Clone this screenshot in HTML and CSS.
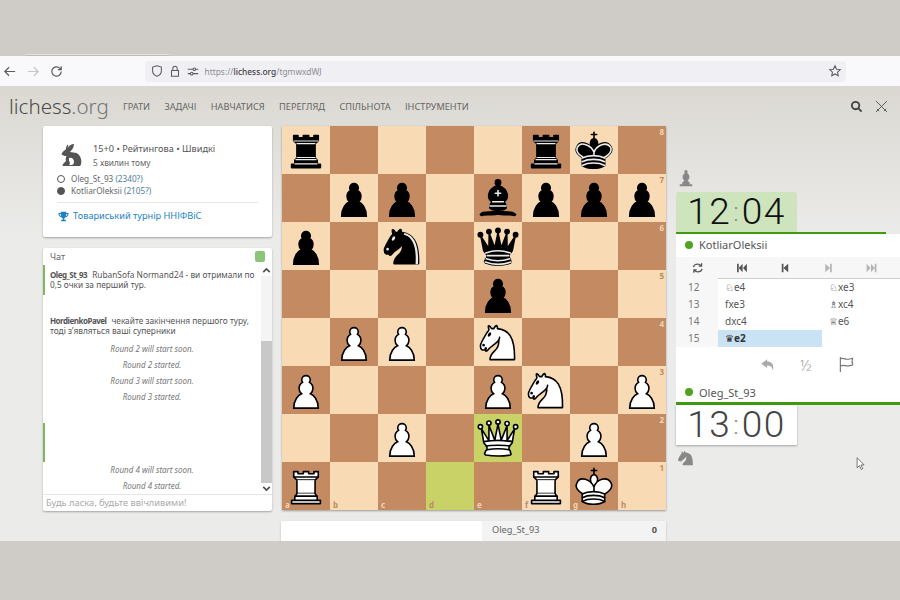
FILE: index.html
```html
<!DOCTYPE html>
<html lang="uk">
<head>
<meta charset="utf-8">
<title>lichess.org</title>
<link rel="stylesheet" href="styles.css">
</head>
<body>
<div class="band-top"><div class="tab-edge"></div></div>

<div class="toolbar">
  <svg class="tb-ic" viewBox="0 0 16 16"><path d="M14 8H3M7.5 3.500 3 8l4.500 4.500"/></svg>
  <svg class="tb-ic off" viewBox="0 0 16 16"><path d="M2 8h11M8.500 3.500 13 8l-4.500 4.500"/></svg>
  <svg class="tb-ic" viewBox="0 0 16 16"><path d="M13 8a5 5 0 1 1-1.500-3.600L13 6M13 2.500V6H9.500"/></svg>
  <div class="urlbar">
    <svg class="url-ic" viewBox="0 0 16 16"><path d="M8 2 3 3.500V8c0 3 2.200 5 5 6 2.800-1 5-3 5-6V3.500z"/></svg>
    <svg class="url-ic" viewBox="0 0 16 16"><path d="M4 7.500h8V14H4zM5.500 7.500V5a2.500 2.500 0 0 1 5 0v2.500"/></svg>
    <svg class="url-ic" viewBox="0 0 16 16"><path d="M2 6h6M11 6h3M2 11h3M8 11h6"/><circle cx="9.500" cy="6" r="1.500"/><circle cx="6.500" cy="11" r="1.500"/></svg>
    <span class="url">https://<b>lichess.org</b>/tgmwxdWJ</span>
    <svg class="url-ic star" viewBox="0 0 16 16"><path d="m8 2 1.800 3.900 4.200.5-3.100 2.900.8 4.200L8 11.400l-3.700 2.100.8-4.200L2 6.400l4.200-.5z"/></svg>
  </div>
</div>

<div class="page">
  <header class="site-head">
    <div class="logo">lichess<span>.org</span></div>
    <nav class="nav">
      <span>Грати</span><span>Задачі</span><span>Навчатися</span><span>Перегляд</span><span>Спільнота</span><span>Інструменти</span>
    </nav>
    <div class="head-ic">
      <svg class="ic-search" viewBox="0 0 14 14"><circle cx="6" cy="6" r="4"/><path d="m9 9 3.500 3.500"/></svg>
      <svg class="ic-swords" viewBox="0 0 14 14"><path d="m1 1 12 12M13 1 1 13M2 9.500 4.500 12M12 9.500 9.500 12"/></svg>
    </div>
  </header>

  <main class="layout">
    <aside class="left">
      <section class="card game">
        <div class="game-top">
          <svg class="hare" viewBox="0 0 24 24"><path fill-rule="evenodd" d="M15 1c-3 0-5 2-6.500 4C9 3.500 9.500 2 9 1.500 7.500 2 7 4.500 6.800 6.500 4.500 7.500 3 9.500 2.500 11.500l3 1.500h2C6.500 15 6.500 17 7 18l-3 3-.5 2H21l1-1.500c1-4 0-9-4.500-11.500C15.500 9.500 13 9.500 11 9c2-2 4-5 4-8zM10 15c3-1 5 1 5 4 0 1.500-1 2.500-2 3h-3c1.500-1 1-3 0-4z"/></svg>
          <div>
            <div class="game-title">15+0 • Рейтингова • Швидкі</div>
            <div class="game-time">5 хвилин тому</div>
          </div>
        </div>
        <div class="pl"><i class="dot w"></i>Oleg_St_93 <span class="rt">(2340?)</span></div>
        <div class="pl"><i class="dot b"></i>KotliarOleksii <span class="rt">(2105?)</span></div>
        <div class="tour">
          <svg class="trophy" viewBox="0 0 14 14"><path d="M3.500 1h7v1.500h3C13.500 6 12 7.500 9.500 8 9 8.700 8.500 9 8 9.300V11h2v2H4v-2h2V9.300C5.500 9 5 8.700 4.500 8 2 7.500.5 6 .5 2.500h3zM2 3.800c.2 1.500.8 2.300 2 2.700-.3-.8-.4-1.800-.5-2.700zm10 0h-1.500c-.1.900-.2 1.900-.5 2.700 1.200-.4 1.800-1.200 2-2.700z"/></svg>
          Товариський турнір ННІФВіС
        </div>
      </section>

      <section class="card chat">
        <div class="chat-head"><span>Чат</span><i class="chat-toggle"></i></div>
        <div class="chat-body">
          <div class="chat-list">
            <div class="msg flag">
              <div class="ln"><b>Oleg_St_93</b><span>RubanSofa Normand24 - ви отримали по</span></div>
              <div class="ln">0,5 очки за перший тур.</div>
            </div>
            <div class="gap-a"></div>
            <div class="msg tight">
              <div class="ln"><b>HordienkoPavel</b><span>чекайте закінчення першого туру,</span></div>
              <div class="ln">тоді з’являться ваші суперники</div>
            </div>
            <p class="sys">Round 2 will start soon.</p>
            <p class="sys">Round 2 started.</p>
            <p class="sys">Round 3 will start soon.</p>
            <p class="sys">Round 3 started.</p>
            <div class="gap-b"></div>
            <div class="hidden-msg"></div>
            <p class="sys">Round 4 will start soon.</p>
            <p class="sys">Round 4 started.</p>
          </div>
          <div class="scroll">
            <svg class="sc-arrow" viewBox="0 0 10 10"><path d="m2 6.500 3-3 3 3"/></svg>
            <div class="sc-track"><div class="sc-thumb"></div></div>
            <svg class="sc-arrow" viewBox="0 0 10 10"><path d="m2 3.500 3 3 3-3"/></svg>
          </div>
        </div>
        <div class="chat-input">Будь ласка, будьте ввічливими!</div>
      </section>
    </aside>

    <section class="center">
      <div class="board">
        <div class="sq"><svg class="pc" viewBox="0 0 45 45"><use href="#br"/></svg></div><div class="sq"></div><div class="sq"></div><div class="sq"></div><div class="sq"></div><div class="sq"><svg class="pc" viewBox="0 0 45 45"><use href="#br"/></svg></div><div class="sq"><svg class="pc" viewBox="0 0 45 45"><use href="#bk"/></svg></div><div class="sq"><span class="rk on-d">8</span></div>
        <div class="sq"></div><div class="sq"><svg class="pc" viewBox="0 0 45 45"><use href="#bp"/></svg></div><div class="sq"><svg class="pc" viewBox="0 0 45 45"><use href="#bp"/></svg></div><div class="sq"></div><div class="sq"><svg class="pc" viewBox="0 0 45 45"><use href="#bb"/></svg></div><div class="sq"><svg class="pc" viewBox="0 0 45 45"><use href="#bp"/></svg></div><div class="sq"><svg class="pc" viewBox="0 0 45 45"><use href="#bp"/></svg></div><div class="sq"><svg class="pc" viewBox="0 0 45 45"><use href="#bp"/></svg><span class="rk on-l">7</span></div>
        <div class="sq"><svg class="pc" viewBox="0 0 45 45"><use href="#bp"/></svg></div><div class="sq"></div><div class="sq"><svg class="pc" viewBox="0 0 45 45"><use href="#bn"/></svg></div><div class="sq"></div><div class="sq"><svg class="pc" viewBox="0 0 45 45"><use href="#bq"/></svg></div><div class="sq"></div><div class="sq"></div><div class="sq"><span class="rk on-d">6</span></div>
        <div class="sq"></div><div class="sq"></div><div class="sq"></div><div class="sq"></div><div class="sq"><svg class="pc" viewBox="0 0 45 45"><use href="#bp"/></svg></div><div class="sq"></div><div class="sq"></div><div class="sq"><span class="rk on-l">5</span></div>
        <div class="sq"></div><div class="sq"><svg class="pc" viewBox="0 0 45 45"><use href="#wp"/></svg></div><div class="sq"><svg class="pc" viewBox="0 0 45 45"><use href="#wp"/></svg></div><div class="sq"></div><div class="sq"><svg class="pc" viewBox="0 0 45 45"><use href="#wn"/></svg></div><div class="sq"></div><div class="sq"></div><div class="sq"><span class="rk on-d">4</span></div>
        <div class="sq"><svg class="pc" viewBox="0 0 45 45"><use href="#wp"/></svg></div><div class="sq"></div><div class="sq"></div><div class="sq"></div><div class="sq"><svg class="pc" viewBox="0 0 45 45"><use href="#wp"/></svg></div><div class="sq"><svg class="pc" viewBox="0 0 45 45"><use href="#wn"/></svg></div><div class="sq"></div><div class="sq"><svg class="pc" viewBox="0 0 45 45"><use href="#wp"/></svg><span class="rk on-l">3</span></div>
        <div class="sq"></div><div class="sq"></div><div class="sq"><svg class="pc" viewBox="0 0 45 45"><use href="#wp"/></svg></div><div class="sq"></div><div class="sq hl"><svg class="pc" viewBox="0 0 45 45"><use href="#wq"/></svg></div><div class="sq"></div><div class="sq"><svg class="pc" viewBox="0 0 45 45"><use href="#wp"/></svg></div><div class="sq"><span class="rk on-d">2</span></div>
        <div class="sq"><svg class="pc" viewBox="0 0 45 45"><use href="#wr"/></svg><span class="fl on-d">a</span></div><div class="sq"><span class="fl on-l">b</span></div><div class="sq"><span class="fl on-d">c</span></div><div class="sq hl"><span class="fl on-l">d</span></div><div class="sq"><span class="fl on-d">e</span></div><div class="sq"><svg class="pc" viewBox="0 0 45 45"><use href="#wr"/></svg><span class="fl on-l">f</span></div><div class="sq"><svg class="pc" viewBox="0 0 45 45"><use href="#wk"/></svg><span class="fl on-d">g</span></div><div class="sq"><span class="fl on-l">h</span><span class="rk on-l">1</span></div>
      </div>
      <div class="crosstable">
        <div class="ct-blank"></div>
        <div class="ct-row"><span>Oleg_St_93</span><b>0</b></div>
      </div>
    </section>

    <aside class="right">
      <svg class="ghost" viewBox="0 0 24 24"><path d="M12 2.500a2 2 0 0 1 1.300 3.500C15.500 7.500 16.500 9.500 16 12c-.3 1.300-1.200 2.200-2 2.800.3 1 1.300 2 2.500 2.500v2.200h3V22H4.500v-2.500h3v-2.200c1.200-.5 2.200-1.500 2.500-2.500-.8-.6-1.700-1.500-2-2.800-.5-2.500.5-4.500 2.700-6A2 2 0 0 1 12 2.500z"/></svg>
      <div class="clock running"><span>12</span><i>:</i><span>04</span></div>
      <div class="bar short"></div>
      <div class="panel">
        <div class="user"><i class="on"></i>KotliarOleksii</div>
        <div class="controls">
          <svg class="ctl flip" viewBox="0 0 14 14"><path d="M2 6C2.500 3.500 4.500 2.500 7 2.500c1.700 0 3 .7 4 1.800M11.500 1.500v3.300H8.200M12 8c-.5 2.500-2.500 3.500-5 3.500-1.700 0-3-.7-4-1.800M2.500 12.500V9.200h3.300"/></svg>
          <svg class="ctl" viewBox="0 0 14 14"><path class="f" d="M1.500 2h2v10h-2zM8 2v10L3.500 7zM13 2v10L8.500 7z"/></svg>
          <svg class="ctl" viewBox="0 0 14 14"><path class="f" d="M3.500 2h2v10h-2zM11 2v10L5.500 7z"/></svg>
          <svg class="ctl dim" viewBox="0 0 14 14"><path class="f" d="M8.500 2h2v10h-2zM3 2v10l5.500-5z"/></svg>
          <svg class="ctl dim" viewBox="0 0 14 14"><path class="f" d="M10.500 2h2v10h-2zM1 2v10l4.500-5zM6 2v10l4.500-5z"/></svg>
        </div>
        <div class="moves">
          <div class="idx">12</div><div class="mv"><em>♘</em>e4</div><div class="mv"><em>♘</em>xe3</div>
          <div class="idx">13</div><div class="mv">fxe3</div><div class="mv"><em>♗</em>xc4</div>
          <div class="idx">14</div><div class="mv">dxc4</div><div class="mv"><em>♕</em>e6</div>
          <div class="idx">15</div><div class="mv cur"><em>♛</em>e2</div><div class="mv"></div>
        </div>
        <div class="actions">
          <svg class="act back" viewBox="0 0 18 18"><path d="M8 2.500 1.500 7.500 8 12.500V9.500c3.500 0 5.500 1 6.500 5.500 1.500-5.500-.5-10-6.500-10z"/></svg>
          <span class="half">½</span>
          <svg class="act flag-ic" viewBox="0 0 18 18"><path d="M2.500 1v16M2.500 3c3-1.500 5 .5 7 .5 2 0 3.500-.5 6-1-.7 2-.7 4.500 0 7-2.500.5-4 1-6 1s-4-1.500-7 0"/></svg>
        </div>
        <div class="user low"><i class="on"></i>Oleg_St_93</div>
      </div>
      <div class="bar"></div>
      <div class="clock"><span>13</span><i>:</i><span>00</span></div>
      <svg class="ghost knight" viewBox="0 0 45 45"><path d="M22 10c10.500 1 16.500 8 16 29H15c0-9 10-6.500 8-21 .4 2.900-5.500 7.400-8 9-3 2-2.800 4.300-5 4-1-.9 1.400-3 0-3-1 0 .2 1.200-1 2-1 0-4 1-4-4 0-2 6-12 6-12s1.900-1.900 2-3.500c-.7-1-.5-2-.5-3 1-1 3 2.500 3 2.500h2s.8-2 2.500-3c1 0 1 3 1 3z"/></svg>
    </aside>
  </main>
  <svg class="cursor" viewBox="0 0 12 18"><path d="M1 1v13l3-3 2.200 5 2-1-2.200-4.800H10z"/></svg>
</div>

<div class="band-bottom"></div>

<svg class="defs" width="0" height="0" aria-hidden="true">
<defs>
<g id="wp"><path d="M22.5 9c-2.21 0-4 1.79-4 4 0 .89.29 1.71.78 2.38C17.33 16.5 16 18.59 16 21c0 2.03.94 3.84 2.41 5.03-3 1.06-7.41 5.55-7.41 13.47h23c0-7.92-4.41-12.41-7.41-13.47 1.47-1.19 2.41-3 2.41-5.03 0-2.41-1.33-4.5-3.28-5.62.49-.67.78-1.49.78-2.38 0-2.21-1.79-4-4-4z" fill="#fff" stroke="#000" stroke-width="1.5" stroke-linecap="round"/></g>
<g id="bp"><path d="M22.5 9c-2.21 0-4 1.79-4 4 0 .89.29 1.71.78 2.38C17.33 16.5 16 18.59 16 21c0 2.03.94 3.84 2.41 5.03-3 1.06-7.41 5.55-7.41 13.47h23c0-7.92-4.41-12.41-7.41-13.47 1.47-1.19 2.41-3 2.41-5.03 0-2.41-1.33-4.5-3.28-5.62.49-.67.78-1.49.78-2.38 0-2.21-1.79-4-4-4z" fill="#000" stroke="#000" stroke-width="1.5" stroke-linecap="round"/></g>
<g id="wr" fill="#fff" fill-rule="evenodd" stroke="#000" stroke-width="1.5" stroke-linecap="round" stroke-linejoin="round">
<path d="M9 39h27v-3H9v3zM12 36v-4h21v4H12zM11 14V9h4v2h5V9h5v2h5V9h4v5" stroke-linecap="butt"/>
<path d="M34 14l-3 3H14l-3-3"/>
<path d="M31 17v12.5H14V17" stroke-linecap="butt" stroke-linejoin="miter"/>
<path d="M31 29.5l1.5 2.5h-20l1.5-2.5"/>
<path d="M11 14h23" fill="none" stroke-linejoin="miter"/>
</g>
<g id="br" fill="#000" fill-rule="evenodd" stroke="#000" stroke-width="1.5" stroke-linecap="round" stroke-linejoin="round">
<path d="M9 39h27v-3H9v3zM12.5 32l1.5-2.5h17l1.5 2.5h-20zM12 36v-4h21v4H12z" stroke-linecap="butt"/>
<path d="M14 29.5v-13h17v13H14z" stroke-linecap="butt" stroke-linejoin="miter"/>
<path d="M14 16.5L11 14h23l-3 2.5H14zM11 14V9h4v2h5V9h5v2h5V9h4v5H11z" stroke-linecap="butt"/>
<path d="M12 35.5h21M13 31.5h19M14 29.5h17M14 16.5h17M11 14h23" fill="none" stroke="#ececec" stroke-width="1" stroke-linejoin="miter"/>
</g>
<g id="wn" fill="none" fill-rule="evenodd" stroke="#000" stroke-width="1.5" stroke-linecap="round" stroke-linejoin="round">
<path d="M22 10c10.5 1 16.5 8 16 29H15c0-9 10-6.5 8-21" fill="#fff"/>
<path d="M24 18c.38 2.91-5.55 7.37-8 9-3 2-2.82 4.34-5 4-1.042-.94 1.41-3.04 0-3-1 0 .19 1.23-1 2-1 0-4.003 1-4-4 0-2 6-12 6-12s1.89-1.9 2-3.5c-.73-.994-.5-2-.5-3 1-1 3 2.5 3 2.5h2s.78-1.992 2.5-3c1 0 1 3 1 3" fill="#fff"/>
<path d="M9.5 25.5a.5.5 0 1 1-1 0 .5.5 0 1 1 1 0zm5.433-9.75a.5 1.5 30 1 1-.866-.5.5 1.5 30 1 1 .866.5z" fill="#000"/>
</g>
<g id="bn" fill="none" fill-rule="evenodd" stroke="#000" stroke-width="1.5" stroke-linecap="round" stroke-linejoin="round">
<path d="M22 10c10.5 1 16.5 8 16 29H15c0-9 10-6.5 8-21" fill="#000"/>
<path d="M24 18c.38 2.91-5.55 7.37-8 9-3 2-2.82 4.34-5 4-1.042-.94 1.41-3.04 0-3-1 0 .19 1.23-1 2-1 0-4.003 1-4-4 0-2 6-12 6-12s1.89-1.9 2-3.5c-.73-.994-.5-2-.5-3 1-1 3 2.500 3 2.500h2s.78-1.992 2.500-3c1 0 1 3 1 3" fill="#000"/>
<path d="M9.5 25.5a.5.5 0 1 1-1 0 .5.5 0 1 1 1 0zm5.433-9.75a.5 1.5 30 1 1-.866-.5.5 1.5 30 1 1 .866.5z" fill="#ececec" stroke="#ececec"/>
<path d="M24.55 10.4l-.45 1.45.5.15c3.15 1 5.65 2.49 7.9 6.75S35.75 29.06 35.25 39l-.05.5h2.25l.05-.5c.5-10.06-.88-16.85-3.25-21.34-2.37-4.49-5.79-6.64-9.19-7.16l-.51-.1z" fill="#ececec" stroke="none"/>
</g>
<g id="bb" fill="none" fill-rule="evenodd" stroke="#000" stroke-width="1.5" stroke-linecap="round" stroke-linejoin="round">
<g fill="#000" stroke-linecap="butt">
<path d="M9 36c3.39-.97 10.11.43 13.5-2 3.39 2.43 10.11 1.03 13.5 2 0 0 1.65.54 3 2-.68.97-1.65.99-3 .5-3.39-.97-10.11.46-13.5-1-3.39 1.46-10.11.03-13.5 1-1.354.49-2.323.47-3-.5 1.354-1.94 3-2 3-2z"/>
<path d="M15 32c2.5 2.5 12.5 2.5 15 0 .5-1.5 0-2 0-2 0-2.5-2.5-4-2.5-4 5.5-1.5 6-11.5-5-15.5-11 4-10.5 14-5 15.5 0 0-2.5 1.5-2.5 4 0 0-.5.5 0 2z"/>
<path d="M25 8a2.5 2.5 0 1 1-5 0 2.5 2.5 0 1 1 5 0z"/>
</g>
<path d="M17.5 26h10M15 30h15m-7.5-14.5v5M20 18h5" stroke="#ececec" stroke-linejoin="miter"/>
</g>
<g id="bq" fill-rule="evenodd" stroke="#000" stroke-width="1.5" stroke-linecap="round" stroke-linejoin="round">
<g stroke="none"><circle cx="6" cy="12" r="2.75"/><circle cx="14" cy="9" r="2.75"/><circle cx="22.5" cy="8" r="2.75"/><circle cx="31" cy="9" r="2.75"/><circle cx="39" cy="12" r="2.75"/></g>
<path d="M9 26c8.5-1.5 21-1.5 27 0l2.5-12.5L31 25l-.3-14.1-5.2 13.6-3-14.5-3 14.5-5.2-13.6L14 25 6.5 13.5 9 26z" stroke-linecap="butt"/>
<path d="M9 26c0 2 1.5 2 2.5 4 1 1.5 1 1 .5 3.5-1.5 1-1.5 2.5-1.5 2.5-1.5 1.5.5 2.5.5 2.5 6.5 1 16.5 1 23 0 0 0 1.5-1 0-2.5 0 0 .5-1.5-1-2.5-.5-2.5-.5-2 .5-3.5 1-2 2.5-2 2.5-4-8.5-1.5-18.5-1.5-27 0z" stroke-linecap="butt"/>
<path d="M11 38.5a35 35 1 0 0 23 0" fill="none" stroke-linecap="butt"/>
<path d="M11 29a35 35 1 0 1 23 0M12.5 31.5h20M11.5 34.5a35 35 1 0 0 22 0M10.5 37.5a35 35 1 0 0 24 0" fill="none" stroke="#ececec"/>
</g>
<g id="wq" fill="#fff" fill-rule="evenodd" stroke="#000" stroke-width="1.5" stroke-linecap="round" stroke-linejoin="round">
<path d="M8 12a2 2 0 1 1-4 0 2 2 0 1 1 4 0zM24.5 7.5a2 2 0 1 1-4 0 2 2 0 1 1 4 0zM41 12a2 2 0 1 1-4 0 2 2 0 1 1 4 0zM16 8.5a2 2 0 1 1-4 0 2 2 0 1 1 4 0zM33 9a2 2 0 1 1-4 0 2 2 0 1 1 4 0z"/>
<path d="M9 26c8.5-1.5 21-1.5 27 0l2-12-7 11V11l-5.5 13.5-3-15-3 15-5.5-14V25L7 14l2 12z" stroke-linecap="butt"/>
<path d="M9 26c0 2 1.5 2 2.5 4 1 1.5 1 1 .5 3.5-1.5 1-1.5 2.5-1.5 2.5-1.5 1.5.5 2.5.5 2.5 6.5 1 16.5 1 23 0 0 0 1.5-1 0-2.5 0 0 .5-1.5-1-2.5-.5-2.5-.5-2 .5-3.5 1-2 2.5-2 2.5-4-8.5-1.5-18.5-1.5-27 0z" stroke-linecap="butt"/>
<path d="M11.5 30c3.5-1 18.5-1 22 0M12 33.5c6-1 15-1 21 0" fill="none"/>
</g>
<g id="wk" fill="none" fill-rule="evenodd" stroke="#000" stroke-width="1.5" stroke-linecap="round" stroke-linejoin="round">
<path d="M22.5 11.63V6M20 8h5" stroke-linejoin="miter"/>
<path d="M22.5 25s4.5-7.5 3-10.5c0 0-1-2.5-3-2.5s-3 2.5-3 2.5c-1.5 3 3 10.5 3 10.5" fill="#fff" stroke-linecap="butt" stroke-linejoin="miter"/>
<path d="M11.5 37c5.5 3.5 15.5 3.5 21 0v-7s9-4.5 6-10.5c-4-6.5-13.5-3.5-16 4V27v-3.5c-3.5-7.5-13-10.5-16-4-3 6 5 10 5 10V37z" fill="#fff"/>
<path d="M11.5 30c5.5-3 15.5-3 21 0m-21 3.5c5.5-3 15.5-3 21 0m-21 3.5c5.5-3 15.5-3 21 0"/>
</g>
<g id="bk" fill="none" fill-rule="evenodd" stroke="#000" stroke-width="1.5" stroke-linecap="round" stroke-linejoin="round">
<path d="M22.5 11.63V6" stroke-linejoin="miter"/>
<path d="M22.5 25s4.5-7.5 3-10.5c0 0-1-2.5-3-2.5s-3 2.5-3 2.5c-1.5 3 3 10.5 3 10.5" fill="#000" stroke-linecap="butt" stroke-linejoin="miter"/>
<path d="M11.5 37c5.5 3.5 15.5 3.5 21 0v-7s9-4.5 6-10.5c-4-6.5-13.5-3.5-16 4V27v-3.5c-3.5-7.5-13-10.5-16-4-3 6 5 10 5 10V37z" fill="#000"/>
<path d="M20 8h5" stroke-linejoin="miter"/>
<path d="M32 29.5s8.5-4 6.03-9.65C34.15 14 25 18 22.5 24.5l.01 2.1-.01-2.1C20 18 9.906 14 6.997 19.85c-2.497 5.65 4.853 9 4.853 9" stroke="#ececec"/>
<path d="M11.5 30c5.5-3 15.5-3 21 0m-21 3.5c5.5-3 15.5-3 21 0m-21 3.5c5.5-3 15.5-3 21 0" stroke="#ececec"/>
</g>
</defs>
</svg>
</body>
</html>
```

FILE: styles.css
```css
* { box-sizing: border-box; }
html { margin: 0; height: 100%; background: #cfcbc7; }
body {
  margin: 0;
  width: 900px;
  height: 600px;
  overflow: hidden;
  display: flex;
  flex-direction: column;
  font-family: "Noto Sans", "Open Sans", sans-serif;
  color: #555;
  background: #cfcbc7;
}
.defs { position: absolute; left: 0; bottom: 0; }

.band-top { height: 56px; flex: none; background-color: #cfcbc7; display: flex; align-items: flex-end; padding-left: 25px; }
.tab-edge { width: 145px; height: 2px; background: #e4e3e3; border-radius: 0 0 3px 3px; border-bottom: 1px solid #bdbab7; }
.band-bottom { height: 59px; flex: none; background: #cfcbc7; }

.toolbar { height: 30px; flex: none; background: #f9f9fb; display: flex; align-items: center; padding-left: 2px; }
.tb-ic { width: 15px; height: 15px; margin-right: 8.500px; fill: none; stroke: #5b5b66; stroke-width: 1.300; flex: none; }
.tb-ic.off { stroke: #c4c4ca; }
.urlbar { margin-left: 72px; width: 701px; height: 21px; background: #f0f0f4; border-radius: 4px; display: flex; align-items: center; padding: 0 4px 0 5px; position: relative; flex: none; }
.url-ic { width: 14px; height: 14px; margin-right: 4px; fill: none; stroke: #5b5b66; stroke-width: 1.200; flex: none; }
.url { font-size: 8.400px; color: #8d8d95; margin-left: 1px; }
.url b { color: #3f3f47; font-weight: 500; }
.star { margin-left: auto; margin-right: 0; }

.page {
  flex: 1;
  min-height: 0;
  overflow: hidden;
  position: relative;
  background: linear-gradient(to bottom, #dbd8d2, #ebebe9 150px);
}
.site-head { height: 40px; display: flex; align-items: center; padding-left: 9px; }
.logo { font-size: 20.600px; font-weight: 300; color: #4a4a4a; width: 114px; line-height: 40px; }
.logo span { color: #757575; }
.nav { display: flex; gap: 14.400px; font-size: 9.200px; text-transform: uppercase; color: #666; padding-top: 1px; }
.head-ic { margin-left: auto; display: flex; align-items: center; gap: 12px; padding-right: 12px; }
.ic-search { width: 13px; height: 13px; fill: none; stroke: #444; stroke-width: 2; }
.ic-swords { width: 13px; height: 13px; fill: none; stroke: #555; stroke-width: 1; }

.layout { display: flex; padding-left: 43px; align-items: flex-start; }
.card { background: #fff; border-radius: 2px; box-shadow: 0 1px 2px rgba(0,0,0,.3); }
.left { width: 229px; flex: none; display: flex; flex-direction: column; gap: 11px; }

.game { height: 111px; padding: 14px 14px 0 14px; }
.game-top { display: flex; align-items: center; gap: 10px; height: 30px; margin-bottom: 3px; padding-left: 2px; }
.hare { width: 24px; height: 24px; fill: #555; flex: none; }
.game-title { font-size: 9.200px; line-height: 14px; color: #555; }
.game-time { font-size: 8.300px; line-height: 13px; color: #666; }
.pl { display: flex; align-items: center; font-size: 8.200px; line-height: 12px; color: #666; white-space: pre; }
.rt { color: #4f7ea0; }
.dot { width: 8px; height: 8px; border-radius: 50%; margin-right: 6px; border: 1.500px solid #555; flex: none; }
.dot.b { background: #555; }
.tour { margin-top: 5px; border-top: 1px solid #e5e5e5; padding-top: 6px; font-size: 9.200px; line-height: 14px; color: #1b83c4; display: flex; align-items: center; gap: 4px; }
.trophy { width: 11px; height: 11px; fill: #1b83c4; flex: none; margin-left: 1px; }

.chat { height: 263px; display: flex; flex-direction: column; }
.chat-head { height: 17px; display: flex; justify-content: space-between; align-items: center; padding: 0 7px; font-size: 9px; color: #666; }
.chat-toggle { width: 10px; height: 11px; background: #8cc47a; border-radius: 2px; }
.chat-body { flex: 1; min-height: 0; display: flex; }
.chat-list { flex: 1; min-width: 0; }
.msg { padding: 5px 4px 5px 7px; font-size: 8.300px; line-height: 10px; color: #555; }
.ln { display: flex; gap: 5px; white-space: nowrap; }
.msg b { font-size: 8px; font-weight: 700; letter-spacing: -.5px; }
.msg.flag { border-left: 2px solid #7db85f; padding-left: 5px; height: 30px; }
.msg.tight { padding-top: 0; }
.gap-a { height: 21px; }
.gap-b { height: 18px; }
.hidden-msg { height: 39px; border-left: 2px solid #7db85f; }
.sys { margin: 0; height: 16px; line-height: 16px; text-align: center; font-size: 8px; font-style: italic; color: #777; }
.scroll { width: 11px; flex: none; background: #f1f1f1; display: flex; flex-direction: column; }
.sc-arrow { width: 11px; height: 11px; flex: none; fill: none; stroke: #505050; stroke-width: 1.500; background: #fff; }
.sc-track { flex: 1; background: #f4f4f4; padding-top: 65px; display: flex; }
.sc-thumb { flex: 1; background: #c8c8c8; }
.chat-input { height: 17px; border-top: 1px solid #e5e5e5; padding-left: 3px; font-size: 9.300px; line-height: 16px; color: #aaa; }

.center { width: 384px; flex: none; margin-left: 10px; }
.board {
  width: 384px;
  height: 384px;
  display: grid;
  grid-template-columns: repeat(8, 48px);
  grid-template-rows: repeat(8, 48px);
  background: repeating-conic-gradient(#c48a62 0 25%, #f8dbb4 0 50%) 0 0 / 96px 96px;
  box-shadow: 0 1px 2px rgba(0,0,0,.35);
}
.sq { position: relative; width: 48px; height: 48px; }
.sq.hl { background: #c9d266; }
.pc { display: block; width: 48px; height: 48px; }
.rk, .fl { position: absolute; font-size: 8px; line-height: 10px; font-weight: 700; }
.rk { top: 1px; right: 2px; }
.fl { bottom: 0; left: 3px; }
.on-d { color: #f1d5b0; }
.on-l { color: #bd8a64; }

.crosstable { margin: 11px 0 0 -1px; width: 385px; height: 30px; display: flex; background: #fff; box-shadow: 0 1px 2px rgba(0,0,0,.25); border-radius: 2px 2px 0 0; }
.ct-blank { width: 201px; }
.ct-row { flex: 1; background: #f3f3f3; display: flex; justify-content: space-between; padding: 0 9px 0 10px; font-size: 9.200px; line-height: 18px; color: #666; }
.ct-row b { color: #555; }

.right { margin-left: 10px; flex: 1; min-width: 0; padding-top: 42px; }
.ghost { display: block; width: 20px; height: 20px; fill: #888; margin: 0 0 4px 0; }
.ghost.knight { margin: 3px 0 0 0; }
.clock { width: 121px; height: 40px; background: #fff; display: flex; align-items: center; justify-content: center; font-family: Roboto, "Noto Sans", sans-serif; font-weight: 300; font-size: 37px; letter-spacing: 1.500px; color: #444; line-height: 40px; box-shadow: 0 1px 2px rgba(0,0,0,.3); }
.clock i { font-style: normal; font-size: 26px; color: #888; margin: 0 3px 0 2px; letter-spacing: 0; }
.clock.running { background: #cde4bd; color: #111; border-radius: 3px 3px 0 0; box-shadow: none; }
.bar { height: 3px; background: #3f9a10; }
.bar.short { width: 210px; height: 2px; }
.panel { background: #fff; }
.user { height: 23px; display: flex; align-items: center; padding: 0 0 2px 9px; font-size: 11px; color: #555; }
.user.low { height: 20px; padding-bottom: 0; }
.user .on { width: 8px; height: 8px; border-radius: 50%; background: #4fa320; margin-right: 6px; }
.controls { height: 22px; display: flex; background: #f7f7f7; }
.ctl { width: 43.500px; height: 22px; padding: 5px 0; fill: none; stroke: #555; stroke-width: 1.500; }
.ctl .f { fill: #555; stroke: none; }
.ctl.dim .f { fill: #b5b5b5; }
.moves { display: grid; grid-template-columns: 42px 104px 1fr; position: relative; }
.moves::before { content: ""; position: absolute; left: 42px; right: 0; top: -1px; height: 1px; background: #cfcfcf; }
.idx { height: 17px; line-height: 17px; background: #f7f7f7; font-size: 10px; color: #777; padding-left: 12px; }
.mv { height: 17px; line-height: 17px; font-size: 10px; color: #555; padding-left: 7px; }
.mv em { font-family: "DejaVu Sans", sans-serif; font-style: normal; font-size: 10px; }
.mv.cur { background: #c9e3f5; color: #333; font-weight: 700; }
.actions { height: 35px; display: flex; align-items: center; padding-left: 84px; gap: 24px; }
.act { width: 16px; height: 16px; }
.back { fill: #aaa; }
.half { font-size: 15px; color: #999; font-weight: 300; width: 14px; }
.flag-ic { fill: none; stroke: #777; stroke-width: 1.200; width: 17px; height: 17px; }

.cursor { position: absolute; left: 856px; top: 371px; width: 10px; height: 14px; fill: #fff; stroke: #555; stroke-width: 1; }
```
